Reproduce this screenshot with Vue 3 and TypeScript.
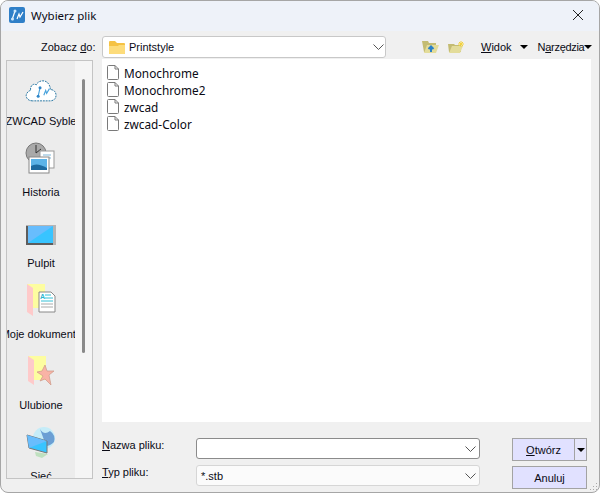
<script setup lang="ts">
const files = ['Monochrome', 'Monochrome2', 'zwcad', 'zwcad-Color']
</script>

<template>
  <div class="dialog">
    <header class="titlebar">
      <svg class="app-icon" width="16" height="16" viewBox="0 0 16 16">
        <rect width="16" height="16" rx="2" fill="#2f7fc8" />
        <path d="M3 13 L6 4 M8 12 L10 7 L11 10 L14 5" fill="none" stroke="#fff" stroke-width="1.2" />
        <circle cx="6" cy="4" r="1.5" fill="#cfe8fb" />
        <circle cx="3.5" cy="12" r="1.5" fill="#cfe8fb" />
      </svg>
      <span class="title">Wybierz plik</span>
      <svg class="close" width="12" height="12" viewBox="0 0 12 12">
        <path d="M1 1 L11 11 M11 1 L1 11" stroke="#222" stroke-width="1" fill="none" />
      </svg>
    </header>

    <div class="toolbar">
      <label class="look-label">Zobacz <u>d</u>o:</label>
      <div class="look-combo">
        <svg width="16" height="14" viewBox="0 0 16 14">
          <path d="M0 2 Q0 1 1 1 H6 L8 3 H15 Q16 3 16 4 V13 Q16 14 15 14 H1 Q0 14 0 13 Z" fill="#f5c244" />
          <path d="M0 6 L9 6 L10 5 H16 V13 Q16 14 15 14 H1 Q0 14 0 13 Z" fill="#fddc7b" />
        </svg>
        <span>Printstyle</span>
        <svg class="chev" width="11" height="6" viewBox="0 0 11 6">
          <path d="M0.5 0.5 L5.5 5.5 L10.5 0.5" fill="none" stroke="#555" />
        </svg>
      </div>
      <div class="tools">
        <svg class="tool-icon" width="17" height="12" viewBox="0 0 17 12">
          <path d="M0 0 H6 L7 2 H14 V11 H2 Z" fill="#c4bc72" />
          <path d="M2 12 L5 4 H17 L14 12 Z" fill="#e3dc9a" />
          <path d="M9 11 V6 M6.5 8 L9 5.5 L11.5 8" fill="none" stroke="#2a80c8" stroke-width="2" />
        </svg>
        <svg class="tool-icon new" width="17" height="12" viewBox="0 0 17 12">
          <path d="M0 3 H6 L7 4 H13 V11 H1 Z" fill="#c4bc72" />
          <path d="M1 12 L4 5 H15 L12 12 Z" fill="#e3dc9a" />
          <path d="M13 0 V6 M10 3 H16 M11 1 L15 5 M15 1 L11 5" stroke="#f3d23c" stroke-width="1" />
        </svg>
        <span class="menu widok"><u>W</u>idok</span>
        <i class="caret first" />
        <span class="menu narz">N<u>a</u>rzędzia</span>
        <i class="caret" />
      </div>
    </div>

    <div class="main">
      <aside class="places">
        <ul class="place-list">
          <li class="place">
            <svg width="32" height="25" viewBox="0 0 34 26">
              <path d="M8 24 C2 24 0 19 2 16 C3 14 5 13 6 13 C5 8 9 5 12 7 C14 2 22 1 25 6 C27 9 27 11 27 12 C31 12 33 15 33 18 C33 22 30 24 27 24 Z" fill="#fff" stroke="#1c6f9e" stroke-dasharray="2 1" />
              <path d="M14 19 L16 10 M20 18 L22 13 L23 16 L26 11" fill="none" stroke="#4aa3dc" stroke-width="1.2" />
              <circle cx="16" cy="10" r="1.6" fill="#2f86c8" />
              <circle cx="14" cy="19" r="1.6" fill="#2f86c8" />
            </svg>
            <span>ZWCAD Syble</span>
          </li>
          <li class="place">
            <svg width="32" height="32" viewBox="0 0 32 32">
              <circle cx="11" cy="11" r="10" fill="#a9a9a9" stroke="#777" />
              <path d="M11 3 V11 L16 7" fill="none" stroke="#333" />
              <rect x="15" y="9" width="14" height="17" fill="#fff" stroke="#999" />
              <path d="M18 13 H26 M18 16 H26" stroke="#7fb5d6" />
              <rect x="4" y="15" width="20" height="16" fill="#fff" stroke="#888" />
              <rect x="6" y="17" width="16" height="11" fill="#5cb3e8" />
              <path d="M6 24 Q12 20 22 26 V28 H6 Z" fill="#1e6aa0" />
            </svg>
            <span>Historia</span>
          </li>
          <li class="place">
            <svg width="30" height="20" viewBox="0 0 30 20">
              <rect width="30" height="20" fill="#5d5d5d" />
              <rect x="27" width="3" height="20" fill="#b5b5b5" />
              <rect x="0" width="30" height="1" fill="#b5b5b5" />
              <rect x="2" y="1" width="25" height="17" fill="#38c4ff" />
              <path d="M2 1 H27 L2 18 Z" fill="#68bdfd" />
            </svg>
            <span>Pulpit</span>
          </li>
          <li class="place">
            <svg width="30" height="33" viewBox="0 0 30 33">
              <rect x="1" y="1" width="18" height="24" fill="#fdfda0" />
              <path d="M1 1 L7 5 V33 L1 29 Z" fill="#fecaca" />
              <path d="M13 9 H25 L29 13 V29 H13 Z" fill="#fff" stroke="#888" />
              <text x="14" y="16" class="glyph">A</text>
              <path d="M19 12 H25 M19 15 H27 M15 18 H27" stroke="#35c0d6" />
              <path d="M15 21 H27 M15 24 H27" stroke="#aaa" />
            </svg>
            <span class="doc">Moje dokumenty</span>
          </li>
          <li class="place">
            <svg width="28" height="32" viewBox="0 0 28 32">
              <rect x="1" y="1" width="18" height="24" fill="#fdfda0" />
              <path d="M1 1 L7 5 V30 L1 26 Z" fill="#fecaca" />
              <path d="M15 16 L18 10 L20 16 L27 16 L22 20 L24 30 L18 24 L13 26 L16 21 L10 17 Z" fill="#f9b3a6" stroke="#c98" stroke-width="0.7" />
            </svg>
            <span>Ulubione</span>
          </li>
          <li class="place">
            <svg width="30" height="32" viewBox="0 0 30 32">
              <circle cx="18" cy="12" r="11" fill="#c5ecf8" />
              <path d="M14 3 Q18 10 24 5 Q30 9 28 16 Q24 20 20 20 L18 14 Z" fill="#6b9fd4" />
              <path d="M9 26 L22 28 L16 32 L10 30 Z" fill="#bfe0bf" />
              <path d="M1 9 L21 15 V27 L3 22 Z" fill="#38c4ff" stroke="#777" />
              <path d="M1 9 L21 15 L3 22 Z" fill="#68bdfd" />
            </svg>
            <span>Sieć</span>
          </li>
        </ul>
        <div class="track"><div class="thumb" /></div>
      </aside>

      <div class="content">
        <ul class="file-list">
          <li v-for="file in files" :key="file" class="file">
            <svg width="12" height="15" viewBox="0 0 12 15">
              <path d="M0.5 1.5 Q0.5 0.5 1.5 0.5 H8 L11.5 4 V13.5 Q11.5 14.5 10.5 14.5 H1.5 Q0.5 14.5 0.5 13.5 Z M8 0.5 V4 H11.5" fill="#fff" stroke="#7a7a7a" />
            </svg>
            <span>{{ file }}</span>
          </li>
        </ul>

        <div class="form">
          <div class="fields">
            <div class="field">
              <label><u>N</u>azwa pliku:</label>
              <div class="input active">
                <svg class="chev" width="11" height="6" viewBox="0 0 11 6">
                  <path d="M0.5 0.5 L5.5 5.5 L10.5 0.5" fill="none" stroke="#555" />
                </svg>
              </div>
            </div>
            <div class="field">
              <label><u>T</u>yp pliku:</label>
              <div class="input">
                <span>*.stb</span>
                <svg class="chev" width="11" height="6" viewBox="0 0 11 6">
                  <path d="M0.5 0.5 L5.5 5.5 L10.5 0.5" fill="none" stroke="#555" />
                </svg>
              </div>
            </div>
          </div>
          <div class="buttons">
            <div class="btn split">
              <span class="btn-label"><u>O</u>twórz</span>
              <span class="btn-arrow"><i class="caret" /></span>
            </div>
            <div class="btn">Anuluj</div>
          </div>
        </div>
      </div>
    </div>
    <svg class="grip" width="9" height="9" viewBox="0 0 9 9">
      <path d="M7 1 h1 v1 h-1 z M4 4 h1 v1 h-1 z M7 4 h1 v1 h-1 z M1 7 h1 v1 h-1 z M4 7 h1 v1 h-1 z M7 7 h1 v1 h-1 z" fill="#aaa" />
    </svg>
  </div>
</template>

<style>
html,
body {
  background: #fff;
}
</style>

<style scoped>
.dialog {
  position: relative;
  box-sizing: border-box;
  width: 600px;
  height: 493px;
  background: #f0f0f0;
  border: 1px solid #a6a6a6;
  border-radius: 8px;
  overflow: hidden;
  font-family: "Liberation Sans", Arial, sans-serif;
  font-size: 11px;
  color: #0a0a14;
}

.titlebar {
  display: flex;
  align-items: center;
  box-sizing: border-box;
  height: 30px;
  padding: 0 15px 2px 8px;
  background: #eef2f9;
}

.app-icon {
  margin-right: 6px;
}

.title {
  flex: 1;
  font-family: "Noto Sans", sans-serif;
  font-size: 11.5px;
}

.toolbar {
  display: flex;
  align-items: center;
  height: 22px;
  margin-top: 5px;
  padding-left: 40px;
}

.look-label {
  width: 61px;
  flex: none;
}

.look-combo {
  display: flex;
  align-items: center;
  gap: 4px;
  box-sizing: border-box;
  flex: none;
  width: 284px;
  height: 22px;
  padding: 0 1px 0 6px;
  background: #fff;
  border: 1px solid #c8c8c8;
  border-radius: 3px;
}

.look-combo .chev {
  margin-left: auto;
}

.tools {
  display: flex;
  align-items: center;
  padding-left: 36px;
}

.tool-icon.new {
  margin-left: 9px;
}

.menu.widok {
  margin-left: 16px;
}

.menu.narz {
  margin-left: 10px;
  letter-spacing: -0.3px;
}

.caret {
  display: inline-block;
  flex: none;
  width: 0;
  height: 0;
  border-left: 4px solid transparent;
  border-right: 4px solid transparent;
  border-top: 4px solid #000;
}

.caret.first {
  margin-left: 8px;
}

.main {
  display: flex;
  margin-top: 1px;
  padding-left: 5px;
}

.places {
  display: flex;
  box-sizing: border-box;
  width: 87px;
  height: 419px;
  margin-top: 1px;
  background: #ececec;
  border: 1px solid #c4c4c4;
  overflow: hidden;
}

.place-list {
  width: 68px;
  margin: 0;
  padding: 0;
  list-style: none;
  overflow: hidden;
  flex: none;
}

.place {
  display: flex;
  flex-direction: column;
  align-items: center;
  justify-content: flex-end;
  height: 71px;
  white-space: nowrap;
}

.place span {
  margin-top: 12px;
  padding-bottom: 2px;
}

.place:first-child {
  height: 68px;
}

.track {
  width: 17px;
  background: #f5f5f5;
  padding: 18px 0 0 7px;
  box-sizing: border-box;
}

.thumb {
  width: 3px;
  height: 274px;
  background: #8a8a8a;
  border-radius: 2px;
}

.glyph {
  font-family: "Liberation Sans", sans-serif;
  font-size: 7px;
  font-weight: 700;
  fill: #2bb5d0;
}

.content {
  flex: 1;
  padding-left: 9px;
}

.file-list {
  box-sizing: border-box;
  width: 489px;
  height: 363px;
  margin: 0;
  padding: 5px 5px;
  list-style: none;
  background: #fff;
}

.file {
  display: flex;
  align-items: center;
  gap: 5px;
  height: 17px;
  font-family: "Noto Sans", sans-serif;
  font-size: 11.8px;
}

.form {
  display: flex;
  margin-top: 16px;
}

.fields {
  display: flex;
  flex-direction: column;
  gap: 6px;
}

.field {
  display: flex;
  align-items: center;
  height: 21px;
}

.field label {
  width: 94px;
  margin-top: -8px;
}

.input {
  display: flex;
  align-items: center;
  box-sizing: border-box;
  width: 284px;
  height: 21px;
  padding: 0 3px 0 4px;
  background: #fbfbfb;
  border: 1px solid #d6d6d6;
  border-radius: 3px;
}

.input.active {
  background: #fff;
  border-color: #8b8b8b;
}

.input .chev {
  margin-left: auto;
}

.buttons {
  display: flex;
  flex-direction: column;
  gap: 5px;
  margin-left: 32px;
}

.btn {
  display: flex;
  align-items: center;
  justify-content: center;
  box-sizing: border-box;
  width: 75px;
  height: 23px;
  background: #e1e1ff;
  border: 1px solid #a3a3a3;
}

.btn.split {
  justify-content: flex-start;
}

.btn-label {
  flex: 1;
  text-align: center;
}

.btn-arrow {
  display: flex;
  align-items: center;
  justify-content: center;
  width: 11px;
  height: 100%;
  border-left: 1px solid #a3a3a3;
  background: #e6e6fb;
}

.grip {
  position: absolute;
  right: 1px;
  bottom: 1px;
}
</style>
